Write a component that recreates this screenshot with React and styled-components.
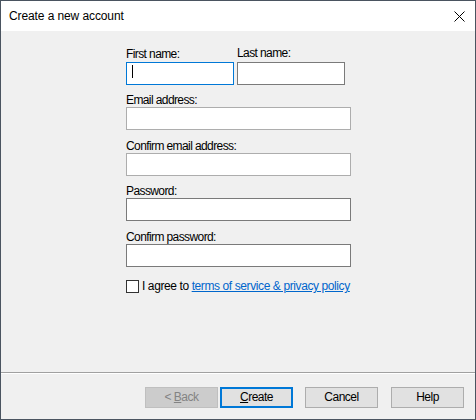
import React from "react";
import styled, { createGlobalStyle } from "styled-components";

const GlobalStyle = createGlobalStyle`
  html, body {
    margin: 0;
    padding: 0;
    background: #f0f0f0;
  }
  body {
    font-family: "Liberation Sans", Arial, sans-serif;
    font-size: 12px;
    color: #000;
  }
`;

const Window = styled.div`
  box-sizing: border-box;
  display: flex;
  flex-direction: column;
  width: 476px;
  height: 420px;
  border: 1px solid #4a5460;
  background: #f0f0f0;
`;

const TitleBar = styled.div`
  align-items: center;
  background: #fff;
  display: flex;
  flex-shrink: 0;
  height: 30px;
  justify-content: space-between;
  padding: 0 10px 0 8px;
`;

const Title = styled.span`
  font-size: 12px;
  letter-spacing: -0.1px;
  line-height: 15px;
`;

const CloseIcon = styled.svg`
  display: block;
  width: 11px;
  height: 11px;
`;

const Form = styled.div`
  display: flex;
  flex: 1;
  flex-direction: column;
  padding: 17px 0 0 125px;
  width: 225px;
`;

const NameRow = styled.div`
  display: flex;
  gap: 3px;
`;

const Field = styled.div`
  display: flex;
  flex-direction: column;
  margin-top: ${({ $space }) => $space || 0}px;
  width: ${({ $width }) => $width || 225}px;
`;

const Label = styled.label`
  letter-spacing: -0.6px;
  line-height: 13px;
  margin-bottom: ${({ $gap }) => $gap || 0}px;
  margin-top: ${({ $lift }) => ($lift ? -1 : 0)}px;
  white-space: nowrap;
`;

const TextBox = styled.div`
  box-sizing: border-box;
  display: flex;
  align-items: flex-start;
  background: #fff;
  border: 1px solid ${({ $tone }) => $tone || "#adadad"};
  height: 23px;
  margin-top: ${({ $drop }) => ($drop ? 1 : 0)}px;
  padding: 2px 5px 0;
`;

const Caret = styled.span`
  background: #000;
  display: block;
  width: 1px;
  height: 13px;
`;

const AgreeRow = styled.div`
  align-items: center;
  display: flex;
  gap: 3px;
  margin-top: 12px;
  white-space: nowrap;
`;

const Checkbox = styled.span`
  box-sizing: border-box;
  background: #fff;
  border: 1px solid #333;
  display: block;
  flex-shrink: 0;
  width: 13px;
  height: 13px;
`;

const AgreeText = styled.span`
  letter-spacing: -0.4px;
  line-height: 15px;
`;

const Link = styled.a`
  color: #0066cc;
  text-decoration: underline;
  cursor: pointer;
`;

const Footer = styled.div`
  border-top: 1px solid #a0a0a0;
  box-shadow: inset 0 1px 0 #fff;
  display: flex;
  flex-shrink: 0;
  justify-content: flex-end;
  padding: 14px 11px 11px 0;
`;

const Button = styled.button`
  box-sizing: border-box;
  background: ${({ disabled }) => (disabled ? "#cccccc" : "#e1e1e1")};
  border: ${({ $default, disabled }) =>
    $default ? "2px solid #0078d7" : `1px solid ${disabled ? "#bfbfbf" : "#adadad"}`};
  color: ${({ disabled }) => (disabled ? "#838383" : "#000")};
  font-family: "Liberation Sans", Arial, sans-serif;
  font-size: 12px;
  height: 21px;
  letter-spacing: -0.5px;
  line-height: 15px;
  margin: 0 0 0 ${({ $space }) => $space || 0}px;
  padding: 0;
  width: 73px;
`;

const Key = styled.u`
  text-decoration: underline;
`;

export default function App() {
  return (
    <>
      <GlobalStyle />
      <Window>
        <TitleBar>
          <Title>Create a new account</Title>
          <CloseIcon viewBox="0 0 11 11">
            <path d="M0.5 0.5 L10.5 10.5 M10.5 0.5 L0.5 10.5" stroke="#000" strokeWidth="1" fill="none" />
          </CloseIcon>
        </TitleBar>

        <Form>
          <NameRow>
            <Field $width={108}>
              <Label $gap={1}>First name:</Label>
              <TextBox $tone="#0078d7">
                <Caret />
              </TextBox>
            </Field>
            <Field $width={108}>
              <Label $gap={1} $lift>
                Last name:
              </Label>
              <TextBox $tone="#7a7a7a" $drop />
            </Field>
          </NameRow>

          <Field $space={9}>
            <Label>Email address:</Label>
            <TextBox />
          </Field>

          <Field $space={10}>
            <Label>Confirm email address:</Label>
            <TextBox />
          </Field>

          <Field $space={9}>
            <Label>Password:</Label>
            <TextBox $tone="#7a7a7a" />
          </Field>

          <Field $space={10}>
            <Label>Confirm password:</Label>
            <TextBox $tone="#7a7a7a" />
          </Field>

          <AgreeRow>
            <Checkbox />
            <AgreeText>
              I agree to <Link>terms of service &amp; privacy policy</Link>
            </AgreeText>
          </AgreeRow>
        </Form>

        <Footer>
          <Button disabled>
            &lt; <Key>B</Key>ack
          </Button>
          <Button $default $space={2}>
            <Key>C</Key>reate
          </Button>
          <Button $space={12}>Cancel</Button>
          <Button $space={13}>Help</Button>
        </Footer>
      </Window>
    </>
  );
}
